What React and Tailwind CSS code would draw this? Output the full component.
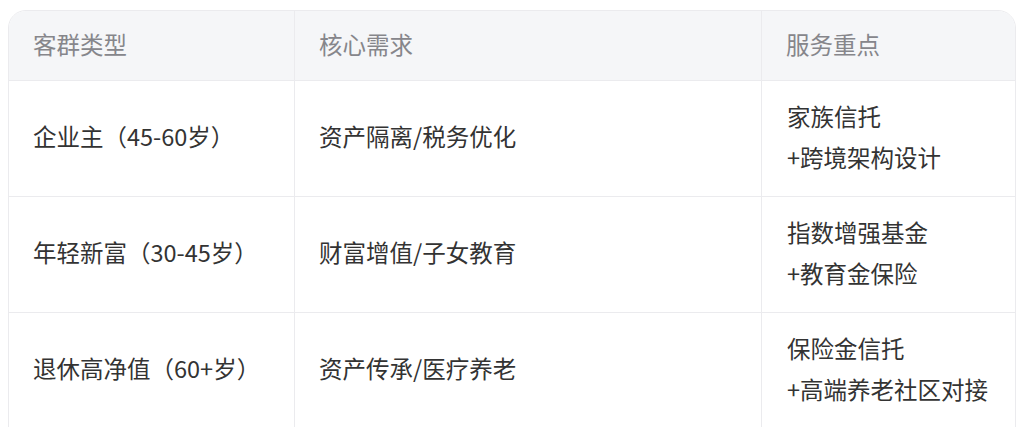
import React from "react";

const rows = [
  { a: "企业主（45-60岁）", b: "资产隔离/税务优化", c: ["家族信托", "+跨境架构设计"] },
  { a: "年轻新富（30-45岁）", b: "财富增值/子女教育", c: ["指数增强基金", "+教育金保险"] },
  { a: "退休高净值（60+岁）", b: "资产传承/医疗养老", c: ["保险金信托", "+高端养老社区对接"] },
];

export default function App() {
  return (
    <div
      className="w-[1025px] h-[427px] bg-white overflow-hidden pt-[10px] pl-[8px]"
      style={{ fontFamily: '"Noto Sans CJK SC", "Noto Sans", sans-serif' }}
    >
      <div className="w-[1008px] rounded-[18px] border border-[#ebebee] overflow-hidden">
        <div className="grid grid-cols-[286px_467px_1fr] h-[70px] bg-[#f5f6f8] border-b border-[#ebebee] text-[23.5px] text-[#86868b]">
          <div className="flex items-center px-[24px] pb-[1px] border-r border-[#ebebee]">客群类型</div>
          <div className="flex items-center px-[24px] pb-[1px] border-r border-[#ebebee]">核心需求</div>
          <div className="flex items-center px-[24px] pb-[1px]">服务重点</div>
        </div>
        {rows.map((r, i) => {
          const pad = i === 2 ? "pb-[28px]" : "pb-[4px]";
          return (
            <div
              key={i}
              className={`grid grid-cols-[286px_467px_1fr] border-b border-[#ebebee] text-[23.5px] text-[#333333] leading-[41px] ${
                i === 2 ? "h-[140px]" : "h-[116px]"
              }`}
            >
              <div className={`flex items-center px-[24px] border-r border-[#ebebee] ${pad}`}>{r.a}</div>
              <div className={`flex items-center px-[24px] border-r border-[#ebebee] ${pad}`}>{r.b}</div>
              <div className={`flex flex-col justify-center px-[25px] ${pad}`}>
                {r.c.map((t, j) => (
                  <div key={j}>{t}</div>
                ))}
              </div>
            </div>
          );
        })}
      </div>
    </div>
  );
}
